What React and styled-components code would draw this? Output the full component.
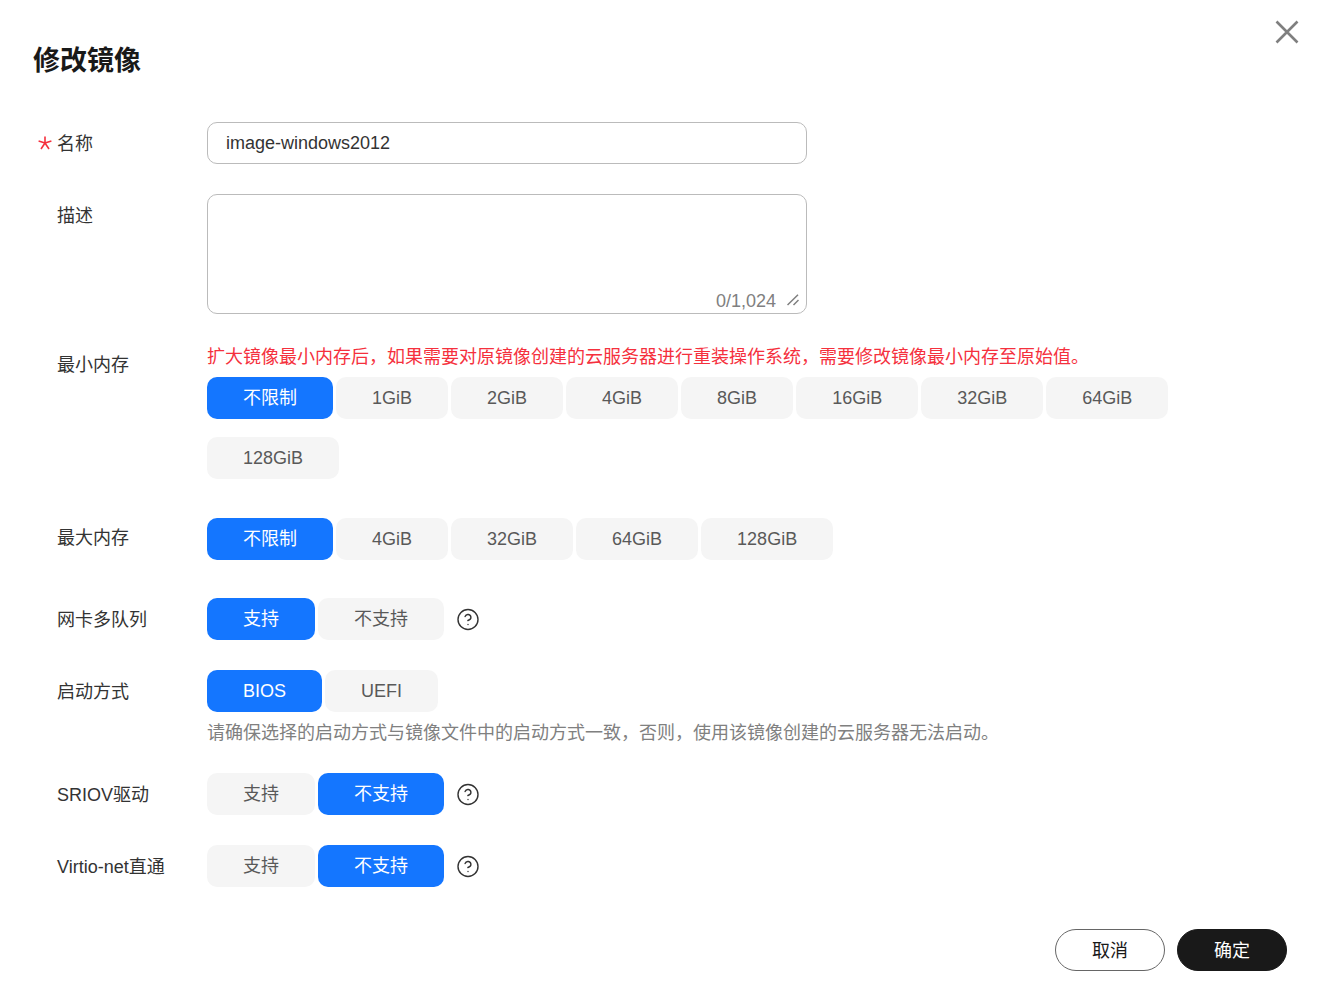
import React from "react";
import styled, { createGlobalStyle } from "styled-components";
import { CircleHelp } from "lucide-react";

const GlobalStyle = createGlobalStyle`
  html, body {
    margin: 0;
    padding: 0;
    background: #fff;
  }
  body {
    font-family: "Liberation Sans", "Noto Sans CJK SC", Arial, sans-serif;
    color: #191919;
  }
`;

const Option = ({ options, active, after }) => (
  <OptionGroup $after={after}>
    {options.map((o) => (
      <OptionButton key={o} $active={o === active}>
        {o}
      </OptionButton>
    ))}
  </OptionGroup>
);

const Help = () => (
  <HelpIcon>
    <CircleHelp size={25} strokeWidth={1.4} />
  </HelpIcon>
);

export default function App() {
  return (
    <Dialog>
      <GlobalStyle />
      <CloseButton aria-label="close">
        <svg width="24" height="24" viewBox="0 0 24 24">
          <path d="M1.5 1.5 L22.5 22.5 M22.5 1.5 L1.5 22.5" stroke="#7f7f7f" strokeWidth="2.6" fill="none" />
        </svg>
      </CloseButton>
      <Title>修改镜像</Title>

      <Row>
        <Label>
          <Star viewBox="0 0 14 14">
            <path d="M7 0.5 V7 M7 7 L13.4 5 M7 7 L11 13 M7 7 L3 13 M7 7 L0.6 5" stroke="#f5303d" strokeWidth="1.6" fill="none" />
          </Star>
          名称
        </Label>
        <Field>
          <TextInput defaultValue="image-windows2012" />
        </Field>
      </Row>

      <Row>
        <Label>描述</Label>
        <Field>
          <AreaBox>
            <TextArea />
            <Counter>0/1,024</Counter>
            <ResizeGrip viewBox="0 0 12 12">
              <path d="M0.5 11 L11 0.8 M6.5 11 L11.5 6" stroke="#7f7f7f" strokeWidth="1.5" fill="none" />
            </ResizeGrip>
          </AreaBox>
        </Field>
      </Row>

      <Row>
        <Label $line={42}>最小内存</Label>
        <Field>
          <Warning>扩大镜像最小内存后，如果需要对原镜像创建的云服务器进行重装操作系统，需要修改镜像最小内存至原始值。</Warning>
          <Option
            options={["不限制", "1GiB", "2GiB", "4GiB", "8GiB", "16GiB", "32GiB", "64GiB", "128GiB"]}
            active="不限制"
            after={9}
          />
        </Field>
      </Row>

      <Row>
        <Label $line={40}>最大内存</Label>
        <Field>
          <Option options={["不限制", "4GiB", "32GiB", "64GiB", "128GiB"]} active="不限制" after={8} />
        </Field>
      </Row>

      <Row>
        <Label>网卡多队列</Label>
        <InlineField>
          <Option options={["支持", "不支持"]} active="支持" />
          <Help />
        </InlineField>
      </Row>

      <Row>
        <Label>启动方式</Label>
        <Field>
          <Option options={["BIOS", "UEFI"]} active="BIOS" />
          <Tip>请确保选择的启动方式与镜像文件中的启动方式一致，否则，使用该镜像创建的云服务器无法启动。</Tip>
        </Field>
      </Row>

      <Row>
        <Label>SRIOV驱动</Label>
        <InlineField>
          <Option options={["支持", "不支持"]} active="不支持" />
          <Help />
        </InlineField>
      </Row>

      <Row>
        <Label>Virtio-net直通</Label>
        <InlineField>
          <Option options={["支持", "不支持"]} active="不支持" />
          <Help />
        </InlineField>
      </Row>

      <Footer>
        <CancelButton>取消</CancelButton>
        <ConfirmButton>确定</ConfirmButton>
      </Footer>
    </Dialog>
  );
}

const Dialog = styled.div`
  position: relative;
  box-sizing: border-box;
  width: 1323px;
  height: 1002px;
  padding: 41px 36px 0 33px;
  background: #fff;
  overflow: hidden;
`;

const CloseButton = styled.button`
  position: absolute;
  top: 20px;
  right: 24px;
  padding: 0;
  border: 0;
  background: none;
  line-height: 0;
`;

const Title = styled.h1`
  margin: 0 0 41px;
  height: 40px;
  font-size: 27px;
  line-height: 40px;
  font-weight: 700;
  color: #191919;
`;

const Row = styled.div`
  display: flex;
  align-items: flex-start;
  margin-bottom: 30px;
`;

const Label = styled.label`
  position: relative;
  box-sizing: border-box;
  flex: 0 0 174px;
  height: 42px;
  padding-left: 24px;
  font-size: 18px;
  line-height: ${(p) => p.$line || 44}px;
  color: #333;
  white-space: nowrap;
`;

const Star = styled.svg`
  position: absolute;
  left: 5px;
  top: 14px;
  width: 14px;
  height: 14px;
`;

const Field = styled.div`
  flex: 1;
  min-width: 0;
`;

const InlineField = styled.div`
  display: flex;
  align-items: center;
  gap: 10px;
`;

const TextInput = styled.input`
  display: block;
  box-sizing: border-box;
  width: 600px;
  height: 42px;
  padding: 0 18px;
  border: 1px solid #bbb;
  border-radius: 10px;
  outline: none;
  font: 18px "Liberation Sans", "Noto Sans CJK SC", sans-serif;
  color: #333;
`;

const AreaBox = styled.div`
  position: relative;
  width: 600px;
  height: 120px;
`;

const TextArea = styled.textarea`
  display: block;
  box-sizing: border-box;
  width: 100%;
  height: 100%;
  padding: 8px 18px;
  border: 1px solid #bbb;
  border-radius: 10px;
  outline: none;
  resize: none;
  font: 18px "Liberation Sans", "Noto Sans CJK SC", sans-serif;
`;

const Counter = styled.span`
  position: absolute;
  right: 31px;
  bottom: 1px;
  font-size: 18px;
  line-height: 24px;
  color: #808080;
`;

const ResizeGrip = styled.svg`
  position: absolute;
  right: 8px;
  bottom: 8px;
  width: 12px;
  height: 12px;
`;

const Warning = styled.div`
  height: 33px;
  font-size: 18px;
  line-height: 27px;
  color: #f5303d;
  white-space: nowrap;
`;

const Tip = styled.div`
  height: 31px;
  font-size: 18px;
  line-height: 43px;
  color: #808080;
  white-space: nowrap;
`;

const OptionGroup = styled.div`
  display: flex;
  flex-wrap: wrap;
  gap: 18px 3px;
  margin-bottom: ${(p) => p.$after || 0}px;
`;

const OptionButton = styled.button`
  box-sizing: border-box;
  height: 42px;
  padding: 0 36px;
  border: 0;
  border-radius: 10px;
  background: ${(p) => (p.$active ? "#1476ff" : "#f5f5f5")};
  color: ${(p) => (p.$active ? "#fff" : "#595959")};
  font: 18px/42px "Liberation Sans", "Noto Sans CJK SC", sans-serif;
`;

const HelpIcon = styled.span`
  display: inline-flex;
  align-items: center;
  justify-content: center;
  width: 24px;
  height: 26px;
  margin-left: 2px;
  padding-top: 1px;
  color: #333;
`;

const Footer = styled.div`
  display: flex;
  justify-content: flex-end;
  gap: 12px;
  margin-top: 42px;
`;

const CancelButton = styled.button`
  box-sizing: border-box;
  width: 110px;
  height: 42px;
  border: 1px solid #666;
  border-radius: 21px;
  background: #fff;
  color: #191919;
  font: 18px/40px "Liberation Sans", "Noto Sans CJK SC", sans-serif;
`;

const ConfirmButton = styled(CancelButton)`
  border-color: #191919;
  background: #191919;
  color: #fff;
`;
